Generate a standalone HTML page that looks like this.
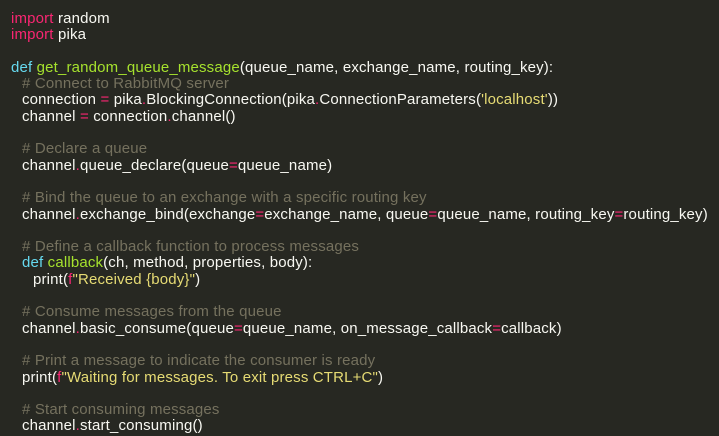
<!DOCTYPE html>
<html><head><meta charset="utf-8"><style>
html,body{margin:0;padding:0;background:#272822;width:719px;height:436px;overflow:hidden}
pre{margin:0;padding:11px 0 0 11px;font-family:"Liberation Sans",sans-serif;font-size:15px;letter-spacing:0.16px;line-height:16.3px;color:#f8f8f2;white-space:pre}
.k{color:#f92672}.b{color:#66d9ef}.g{color:#a6e22e}.c{color:#75715e}.s{color:#e6db74}
.i1{padding-left:11px;display:inline-block}.i2{padding-left:22px;display:inline-block}
</style></head><body><pre><span class="k">import</span> random
<span class="k">import</span> pika

<span class="b">def</span> <span class="g">get_random_queue_message</span>(queue_name, exchange_name, routing_key):
<span class="i1"><span class="c"># Connect to RabbitMQ server</span></span>
<span class="i1">connection <span class="k">=</span> pika<span class="k">.</span>BlockingConnection(pika<span class="k">.</span>ConnectionParameters(<span class="s">'localhost'</span>))</span>
<span class="i1">channel <span class="k">=</span> connection<span class="k">.</span>channel()</span>

<span class="i1"><span class="c"># Declare a queue</span></span>
<span class="i1">channel<span class="k">.</span>queue_declare(queue<span class="k">=</span>queue_name)</span>

<span class="i1"><span class="c"># Bind the queue to an exchange with a specific routing key</span></span>
<span class="i1">channel<span class="k">.</span>exchange_bind(exchange<span class="k">=</span>exchange_name, queue<span class="k">=</span>queue_name, routing_key<span class="k">=</span>routing_key)</span>

<span class="i1"><span class="c"># Define a callback function to process messages</span></span>
<span class="i1"><span class="b">def</span> <span class="g">callback</span>(ch, method, properties, body):</span>
<span class="i2">print(<span class="k">f</span><span class="s">"Received {body}"</span>)</span>

<span class="i1"><span class="c"># Consume messages from the queue</span></span>
<span class="i1">channel<span class="k">.</span>basic_consume(queue<span class="k">=</span>queue_name, on_message_callback<span class="k">=</span>callback)</span>

<span class="i1"><span class="c"># Print a message to indicate the consumer is ready</span></span>
<span class="i1">print(<span class="k">f</span><span class="s">"Waiting for messages. To exit press CTRL+C"</span>)</span>

<span class="i1"><span class="c"># Start consuming messages</span></span>
<span class="i1">channel<span class="k">.</span>start_consuming()</span></pre></body></html>
